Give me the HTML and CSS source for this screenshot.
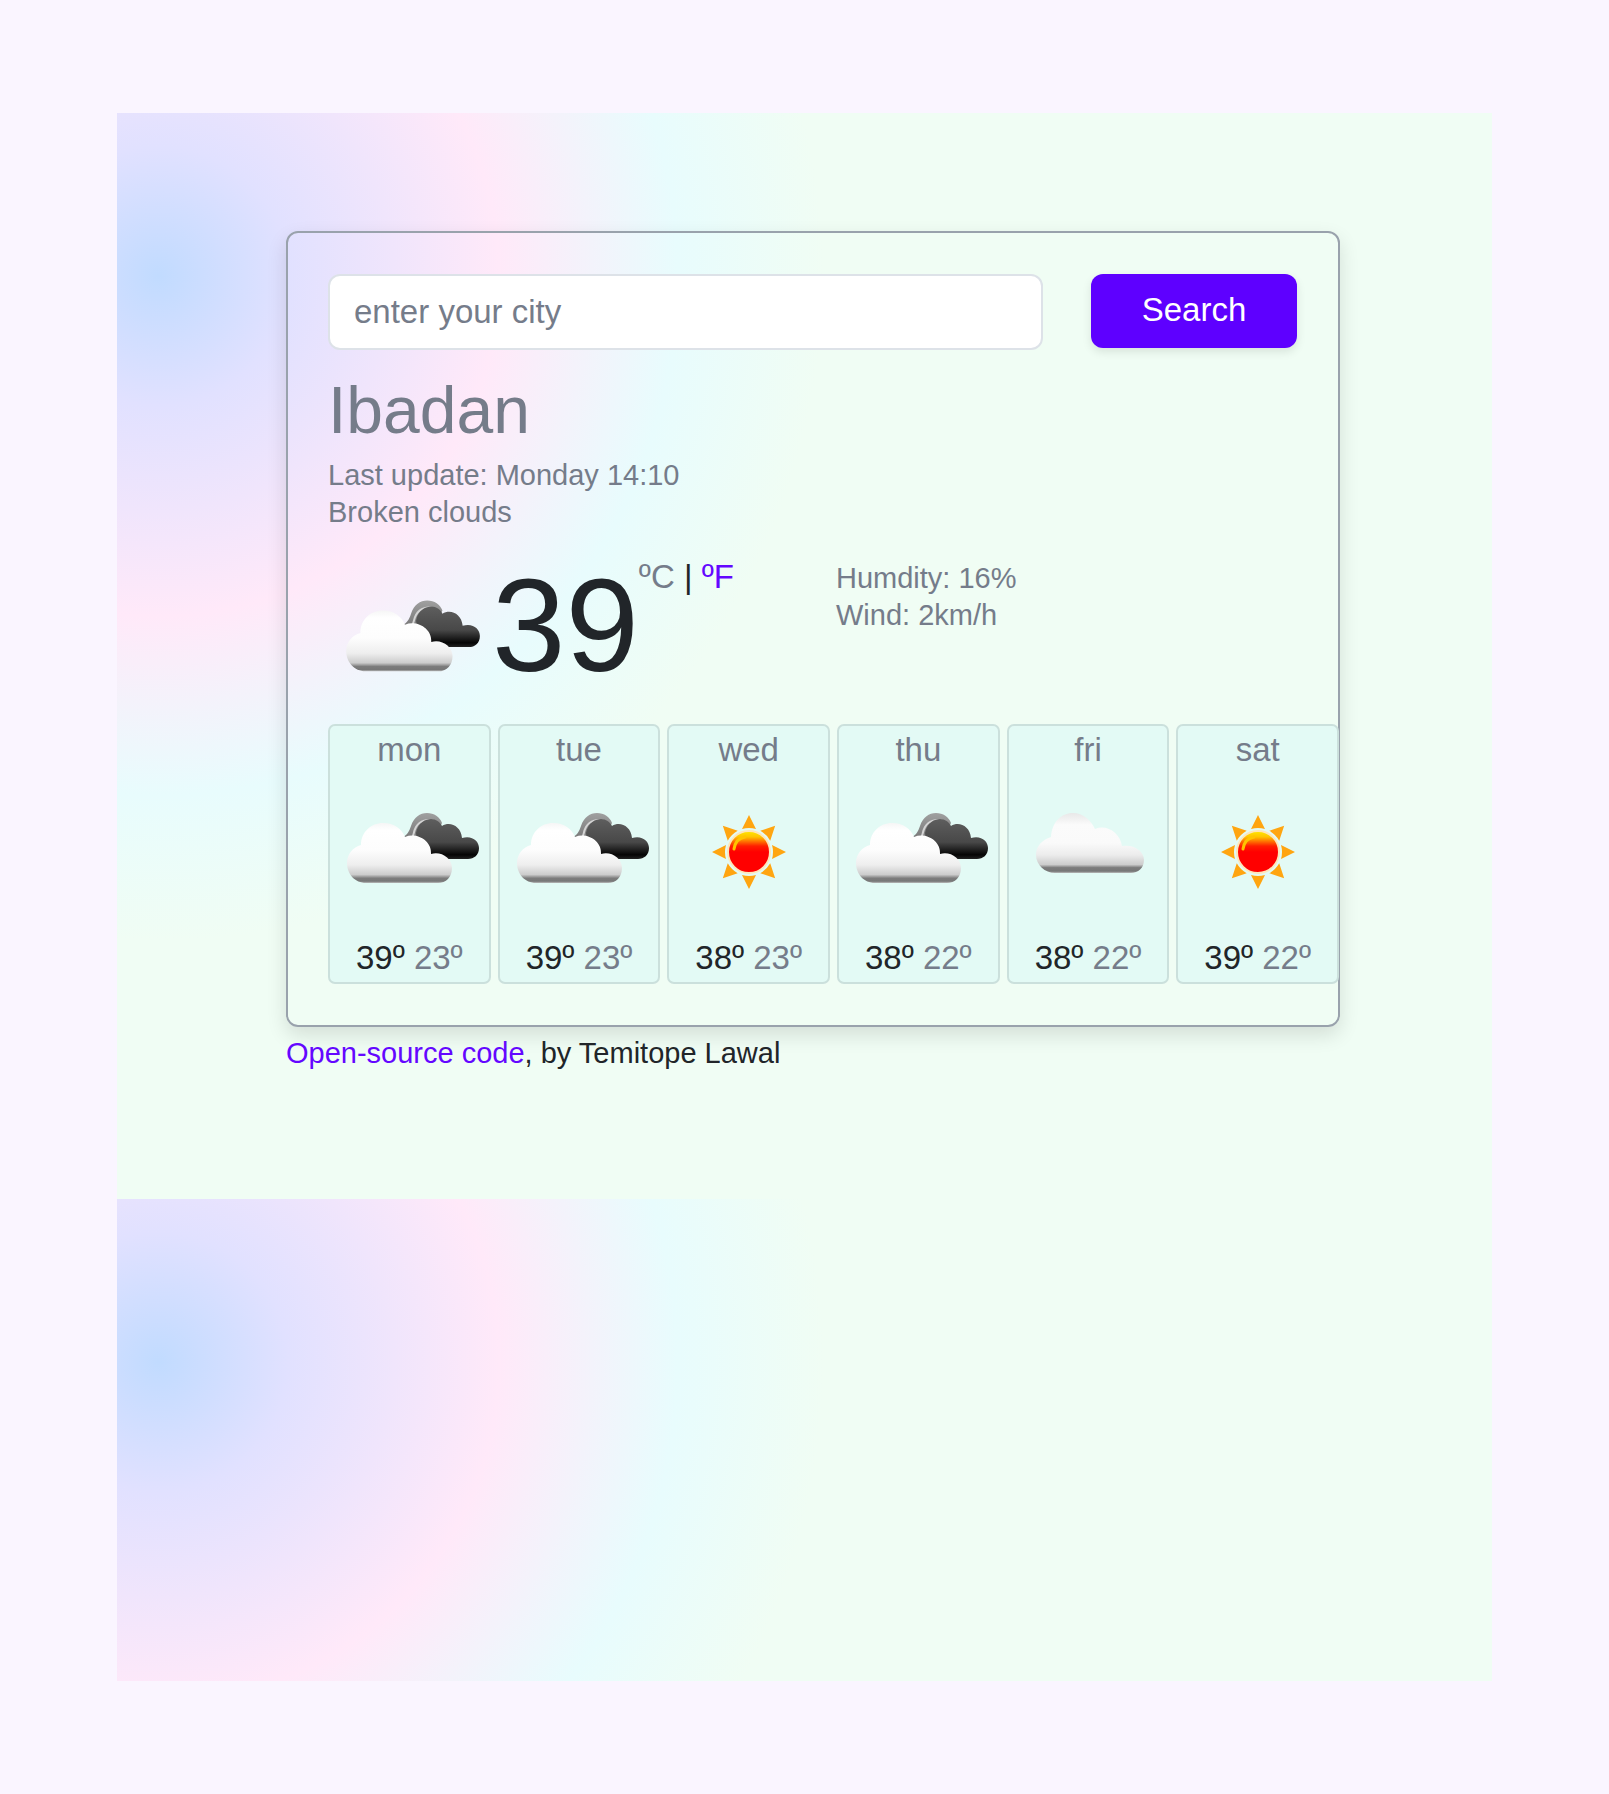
FILE: index.html
```html
<!DOCTYPE html>
<html lang="en">
<head>
<meta charset="utf-8">
<meta name="viewport" content="width=device-width, initial-scale=1">
<title>Weather</title>
<link rel="stylesheet" href="styles.css">
</head>
<body>
<svg class="defs" width="0" height="0" aria-hidden="true">
  <defs>
    <linearGradient id="white-fill" gradientUnits="userSpaceOnUse" x1="0" y1="48" x2="0" y2="108">
      <stop offset="0" stop-color="#f6f6f6"/>
      <stop offset=".12" stop-color="#ffffff"/>
      <stop offset=".45" stop-color="#fdfdfd"/>
      <stop offset=".7" stop-color="#eeeeee"/>
      <stop offset=".86" stop-color="#cccccc"/>
      <stop offset=".92" stop-color="#7c7c7c"/>
      <stop offset=".97" stop-color="#777777"/>
      <stop offset="1" stop-color="#bbbbbb"/>
    </linearGradient>
    <linearGradient id="single-fill" gradientUnits="userSpaceOnUse" x1="0" y1="38" x2="0" y2="98">
      <stop offset="0" stop-color="#e8e8e8"/>
      <stop offset=".2" stop-color="#fbfbfb"/>
      <stop offset=".5" stop-color="#fafafa"/>
      <stop offset=".7" stop-color="#ececec"/>
      <stop offset=".86" stop-color="#cccccc"/>
      <stop offset=".91" stop-color="#7c7c7c"/>
      <stop offset=".97" stop-color="#777777"/>
      <stop offset="1" stop-color="#bbbbbb"/>
    </linearGradient>
    <linearGradient id="dark-fill" gradientUnits="userSpaceOnUse" x1="0" y1="42" x2="0" y2="84">
      <stop offset="0" stop-color="#606060"/>
      <stop offset=".6" stop-color="#484848"/>
      <stop offset=".9" stop-color="#050505"/>
      <stop offset="1" stop-color="#222222"/>
    </linearGradient>
    <linearGradient id="ring-fill" gradientUnits="userSpaceOnUse" x1="0" y1="38" x2="0" y2="64">
      <stop offset="0" stop-color="#a0a0a0"/>
      <stop offset="1" stop-color="#777777"/>
    </linearGradient>
    <linearGradient id="sun-fill" gradientUnits="userSpaceOnUse" x1="0" y1="56" x2="0" y2="98">
      <stop offset="0" stop-color="#ffe800"/>
      <stop offset=".14" stop-color="#ffc400"/>
      <stop offset=".36" stop-color="#ff1e00"/>
      <stop offset=".5" stop-color="#ff0000"/>
    </linearGradient>
    <symbol id="broken-clouds" viewBox="0 0 158 158">
      <path d="M73 62 C77 60 79 57 81 51 C84 42 90 38 97 38 C104 38 110 42 112 48 L104 64 L86 68 Z" fill="url(#ring-fill)"/>
      <path d="M81 65 C84 62 83 57 86 52 C90 45 98 44 104 46" fill="none" stroke="#d4d4d4" stroke-width="2"/>
      <path d="M86 58 C88 47 96 44 101 44 C106 44 110 47 112 51 C120 46 131 51 132 63 C142 60 149 66 149 73 C149 80 144 84 138 84 L108 84 L88 72 Z" fill="url(#dark-fill)"/>
      <path d="M36 108 C25 108 17 99 17 88 C17 79 23 72 31 70 C31 57 41 48 53 48 C64 48 72 54 75 62 C87 57 102 66 101 79 C111 76 122 83 122 93 C122 102 116 108 108 108 Z" fill="url(#white-fill)"/>
    </symbol>
    <symbol id="cloud" viewBox="0 0 158 158">
      <path d="M46 98 C36 98 27 90 27 80 C27 71 33 65 42 62 C43 47 52 38 64 38 C74 38 82 45 86 54 C98 49 111 58 113 71 C125 69 135 76 135 85 C135 93 129 98 122 98 Z" fill="url(#single-fill)"/>
    </symbol>
    <symbol id="sun" viewBox="0 0 158 158">
      <g fill="#ffa510">
        <path id="ray" d="M79 40 L86 54 Q79 52 72 54 Z"/>
        <use href="#ray" transform="rotate(45 79 77)"/>
        <use href="#ray" transform="rotate(90 79 77)"/>
        <use href="#ray" transform="rotate(135 79 77)"/>
        <use href="#ray" transform="rotate(180 79 77)"/>
        <use href="#ray" transform="rotate(225 79 77)"/>
        <use href="#ray" transform="rotate(270 79 77)"/>
        <use href="#ray" transform="rotate(315 79 77)"/>
      </g>
      <circle cx="79" cy="77" r="21" fill="url(#sun-fill)" stroke="#ffe6b8" stroke-width="2"/>
      <path d="M64 74 C65 67 69 63 75 62" fill="none" stroke="#ffc400" stroke-width="3" stroke-linecap="round"/>
    </symbol>
  </defs>
</svg>

<main class="panel">
  <section class="card">
    <form class="search">
      <input class="search-input" type="text" placeholder="enter your city" aria-label="City">
      <button class="search-button" type="button">Search</button>
    </form>

    <h1 class="city">Ibadan</h1>
    <ul class="facts">
      <li>Last update: Monday 14:10</li>
      <li>Broken clouds</li>
    </ul>

    <div class="current">
      <div class="reading">
        <svg class="icon" role="img" aria-label="Broken clouds"><use href="#broken-clouds"/></svg>
        <span class="degrees">39</span>
        <span class="units"><a class="unit active" href="#celsius">ºC</a> | <a class="unit" href="#fahrenheit">ºF</a></span>
      </div>
      <ul class="facts">
        <li>Humdity: 16%</li>
        <li>Wind: 2km/h</li>
      </ul>
    </div>

    <div class="forecast">
      <div class="day"><div class="name">mon</div><svg class="icon"><use href="#broken-clouds"/></svg><div class="temps">39º <span class="low">23º</span></div></div>
      <div class="day"><div class="name">tue</div><svg class="icon"><use href="#broken-clouds"/></svg><div class="temps">39º <span class="low">23º</span></div></div>
      <div class="day"><div class="name">wed</div><svg class="icon"><use href="#sun"/></svg><div class="temps">38º <span class="low">23º</span></div></div>
      <div class="day"><div class="name">thu</div><svg class="icon"><use href="#broken-clouds"/></svg><div class="temps">38º <span class="low">22º</span></div></div>
      <div class="day"><div class="name">fri</div><svg class="icon"><use href="#cloud"/></svg><div class="temps">38º <span class="low">22º</span></div></div>
      <div class="day"><div class="name">sat</div><svg class="icon"><use href="#sun"/></svg><div class="temps">39º <span class="low">22º</span></div></div>
    </div>
  </section>
  <footer class="credit"><a href="#source">Open-source code</a>, by Temitope Lawal</footer>
</main>
</body>
</html>
```
FILE: styles.css
```css
* {
  box-sizing: border-box;
}

body {
  margin: 0;
  padding: 113px 117px;
  background: #faf5ff;
  color: #212529;
  font: 33px/50px "Liberation Sans", Arial, sans-serif;
}

.defs {
  position: absolute;
}

a {
  color: #6407ff;
  text-decoration: none;
}

.panel {
  min-height: calc(100vh - 226px);
  padding: 118px 152px 118px 169px;
  background: #f0fdf4 radial-gradient(circle at 3% 15%, #c1dbff 0%, #e1e1ff 8%, #ffe9f9 21%, #e8fcfd 32%, #f0fdf4 41%) 0 0 / 100% 1086px;
}

.card {
  padding: 41px 41px 41px 40px;
  border: 2px solid #99a2ac;
  border-radius: 12px;
  box-shadow: 0 8px 20px rgba(0, 0, 0, .12);
}

.search {
  display: flex;
  align-items: flex-start;
  gap: 48px;
  margin-bottom: 21px;
}

.search-input {
  flex: 1;
  min-width: 0;
  height: 76px;
  padding: 0 24px;
  border: 2px solid #dde2e8;
  border-radius: 12px;
  background: #fff;
  color: #212529;
  font: inherit;
}

.search-input::placeholder {
  color: #757c8a;
  opacity: 1;
}

.search-button {
  width: 206px;
  height: 74px;
  padding: 0 0 2px;
  border: 0;
  border-radius: 12px;
  background: #5e00ff;
  color: #fff;
  font: inherit;
  box-shadow: 0 4px 10px rgba(0, 0, 0, .1);
}

.city {
  margin: 0 0 7px;
  color: #757c8a;
  font-size: 66px;
  font-weight: 400;
  line-height: 79px;
}

.facts {
  margin: 0;
  padding: 0;
  color: #757c8a;
  font-size: 29px;
  line-height: 37px;
  list-style: none;
}

.current {
  display: grid;
  grid-template-columns: 1fr 1fr;
  column-gap: 6px;
  margin: 27px -41px 0 0;
  padding-bottom: 2px;
}

.current .facts {
  padding-top: 2px;
}

.reading {
  display: flex;
}

.icon {
  display: block;
  width: 158px;
  height: 158px;
}

.reading .icon {
  width: 160px;
  height: 160px;
  margin: 4px 0 0 1px;
}

.degrees {
  margin: 8px 0 0 3px;
  font-size: 132px;
  line-height: 120px;
}

.units {
  line-height: 37px;
}

.unit.active,
.low,
.name {
  color: #757c8a;
}

.forecast {
  display: grid;
  grid-template-columns: repeat(6, 1fr);
  gap: 7px;
  margin-right: -42px;
}

.day {
  border: 2px solid #cbe0dc;
  border-radius: 7px;
  background: #e3faf5;
  text-align: center;
}

.name {
  line-height: 48px;
}

.day .icon {
  margin: 1px auto 0;
}

.temps {
  line-height: 49px;
}

.credit {
  margin-top: 8px;
  font-size: 29px;
  line-height: 37px;
}
```
